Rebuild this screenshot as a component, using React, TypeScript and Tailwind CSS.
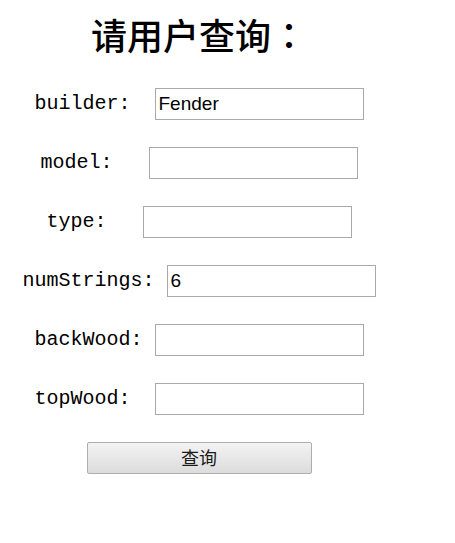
import React, { useState } from 'react';

interface Field {
    name: string;
    gap: string;
    value: string;
}

const fields: Field[] = [
    { name: 'builder', gap: 'ml-[24px]', value: 'Fender' },
    { name: 'model', gap: 'ml-[36px]', value: '' },
    { name: 'type', gap: 'ml-[36px]', value: '' },
    { name: 'numStrings', gap: 'ml-[12px]', value: '6' },
    { name: 'backWood', gap: 'ml-[12px]', value: '' },
    { name: 'topWood', gap: 'ml-[24px]', value: '' },
];

const App = () => {
    const [formData, setFormData] = useState<Record<string, string>>(
        Object.fromEntries(fields.map((f) => [f.name, f.value]))
    );

    const handleChange = (e: React.ChangeEvent<HTMLInputElement>) => {
        const { name, value } = e.target;
        setFormData({ ...formData, [name]: value });
    };

    return (
        <div className="min-h-[543px] w-[455px] bg-white">
            <div className="w-[398px] text-center">
                <h1 className="pt-[16px] mb-[36px] text-[36px] leading-[36px] font-medium text-black font-['Noto_Sans_CJK_SC',sans-serif]">
                    请用户查询
                    <span className="font-['Noto_Sans_CJK_TC',sans-serif]">：</span>
                </h1>
                <form className="flex flex-col gap-[27px]" onSubmit={(e) => e.preventDefault()}>
                    {fields.map((f) => (
                        <div key={f.name} className="flex h-8 items-center justify-center">
                            <label
                                htmlFor={f.name}
                                className="text-[20px] leading-none text-black font-['Liberation_Mono',monospace]"
                            >
                                {f.name}:
                            </label>
                            <input
                                id={f.name}
                                name={f.name}
                                type="text"
                                value={formData[f.name]}
                                onChange={handleChange}
                                className={`${f.gap} h-8 w-[209px] border border-[#a9a9a9] bg-white px-[3px] text-[19px] text-black outline-none font-['Liberation_Sans',Arial,sans-serif]`}
                            />
                        </div>
                    ))}
                    <div className="flex justify-center">
                        <button
                            type="submit"
                            className="h-8 w-[225px] rounded-[2px] border border-[#adadad] bg-gradient-to-b from-[#f3f3f3] to-[#dcdcdc] pb-[2px] text-[18px] text-[#1a1a1a] font-['Noto_Sans_CJK_SC',sans-serif]"
                        >
                            查询
                        </button>
                    </div>
                </form>
            </div>
        </div>
    );
};

export default App;
